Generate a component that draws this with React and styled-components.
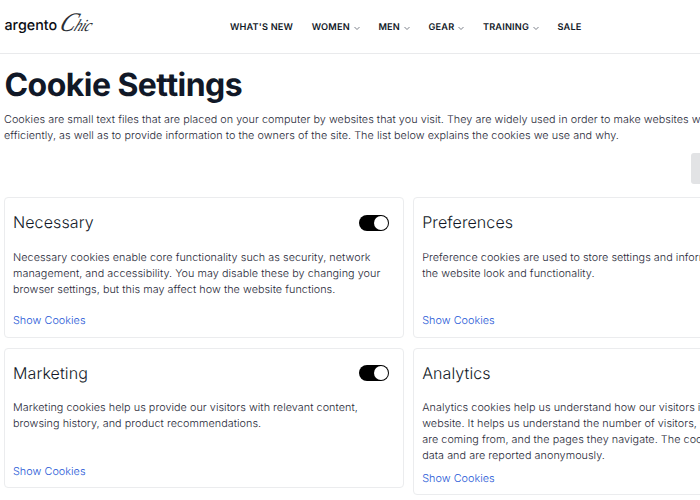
import React from 'react';
import styled, { createGlobalStyle } from 'styled-components';

const GlobalStyle = createGlobalStyle`
  * { box-sizing: border-box; }
  html, body { margin: 0; overflow: hidden; background: #fff; }
  body {
    font-family: Inter, 'Liberation Sans', sans-serif;
    color: #111827;
    text-rendering: geometricPrecision;
  }
  h1, h2, p { margin: 0; }
`;

const Page = styled.div`
  width: 700px;
  height: 500px;
  overflow: hidden;
`;

const Header = styled.header`
  height: 54px;
  border-bottom: 1px solid #e9eaec;
  display: flex;
  align-items: flex-start;
`;

const Logo = styled.a`
  display: flex;
  align-items: baseline;
  width: 230px;
  height: 53px;
  padding: 8px 0 0 4.5px;
  color: #0b0d12;
  white-space: nowrap;
`;

const Brand = styled.span`
  font-size: 14.3px;
  line-height: 36px;
  font-weight: 550;
`;

const Script = styled.span`
  display: block;
  margin-left: 1px;
  font: italic 400 17px/24px 'Liberation Serif', serif;
  letter-spacing: -0.5px;
  color: #2b2e35;
  transform: translateY(1px) skewX(-24deg) scaleX(0.85);
  transform-origin: left 75%;

  &::first-letter { font-size: 27px; }
`;

const Nav = styled.nav`
  display: flex;
  gap: 18.6px;
  padding-top: 20px;
`;

const NavItem = styled.a`
  display: flex;
  align-items: center;
  gap: 4px;
  font-size: 9.2px;
  line-height: 15px;
  font-weight: 600;
  letter-spacing: 0.17px;
  white-space: nowrap;
`;

const Main = styled.main`
  width: 813px;
  padding: 12px 0 0 4px;
`;

const Title = styled.h1`
  margin-left: 0.5px;
  font-size: 32px;
  line-height: 38px;
  font-weight: 700;
  letter-spacing: -0.55px;
`;

const Copy = styled.p`
  font-size: 10.8px;
  line-height: 16px;
  font-weight: 300;
  letter-spacing: 0.05px;
  color: #1f2937;
  white-space: pre;
`;

const Intro = styled(Copy)`
  margin-top: 8px;
`;

const Actions = styled.div`
  display: flex;
  justify-content: flex-end;
  margin: 9px 0 13px;
`;

const SaveButton = styled.button`
  width: 122px;
  height: 31px;
  border: 0;
  border-radius: 3px;
  background: #e2e3e5;
`;

const Grid = styled.div`
  display: grid;
  grid-template-columns: 399.5px 399.5px;
  align-items: start;
  gap: 10px 9.7px;
`;

const Card = styled.section`
  display: flex;
  flex-direction: column;
  min-height: 140.5px;
  padding: 11px 14px 7.4px 8px;
  border: 1px solid #ebecee;
  border-radius: 4px;
`;

const CardHead = styled.div`
  display: flex;
  justify-content: space-between;
  align-items: center;
  height: 26px;
  margin-bottom: 14.6px;
`;

const CardTitle = styled.h2`
  font-size: 16px;
  line-height: 26px;
  font-weight: 300;
  letter-spacing: 0.1px;
`;

const Toggle = styled.span`
  margin-top: 1px;
  width: 29.5px;
  height: 16px;
  padding: 1px;
  border-radius: 8px;
  background: #000;
  display: flex;
  justify-content: flex-end;
`;

const Knob = styled.span`
  width: 14px;
  height: 14px;
  border-radius: 50%;
  background: #fff;
`;

const ShowLink = styled.a`
  margin-top: auto;
  padding-top: 7px;
  font-size: 10.8px;
  line-height: 16px;
  font-weight: 300;
  letter-spacing: 0.05px;
  color: #2457d6;
`;

const Chevron = () => (
  <svg width="6" height="6" viewBox="0 0 6 6" fill="none" stroke="#5b616c" strokeWidth="0.8">
    <path d="M0.5 2 3 4.5 5.5 2" />
  </svg>
);

const nav = [
  ["WHAT'S NEW", false],
  ['WOMEN', true],
  ['MEN', true],
  ['GEAR', true],
  ['TRAINING', true],
  ['SALE', false],
];

const cards = [
  ['Necessary', 'Necessary cookies enable core functionality such as security, network\nmanagement, and accessibility. You may disable these by changing your\nbrowser settings, but this may affect how the website functions.'],
  ['Preferences', 'Preference cookies are used to store settings and information that changes\nthe website look and functionality.'],
  ['Marketing', 'Marketing cookies help us provide our visitors with relevant content,\nbrowsing history, and product recommendations.'],
  ['Analytics', 'Analytics cookies help us understand how our visitors interact with the\nwebsite. It helps us understand the number of visitors, where the visitors\nare coming from, and the pages they navigate. The cookies collect this\ndata and are reported anonymously.'],
];

export default function App() {
  return (
    <Page>
      <GlobalStyle />
      <Header>
        <Logo>
          <Brand>argento</Brand>
          <Script>Chic</Script>
        </Logo>
        <Nav>
          {nav.map(([label, menu]) => (
            <NavItem key={label}>{label}{menu && <Chevron />}</NavItem>
          ))}
        </Nav>
      </Header>
      <Main>
        <Title>Cookie Settings</Title>
        <Intro>{'Cookies are small text files that are placed on your computer by websites that you visit. They are widely used in order to make websites work, or work more\nefficiently, as well as to provide information to the owners of the site. The list below explains the cookies we use and why.'}</Intro>
        <Actions><SaveButton aria-label="Save" /></Actions>
        <Grid>
          {cards.map(([title, text]) => (
            <Card key={title}>
              <CardHead>
                <CardTitle>{title}</CardTitle>
                <Toggle><Knob /></Toggle>
              </CardHead>
              <Copy>{text}</Copy>
              <ShowLink>Show Cookies</ShowLink>
            </Card>
          ))}
        </Grid>
      </Main>
    </Page>
  );
}
